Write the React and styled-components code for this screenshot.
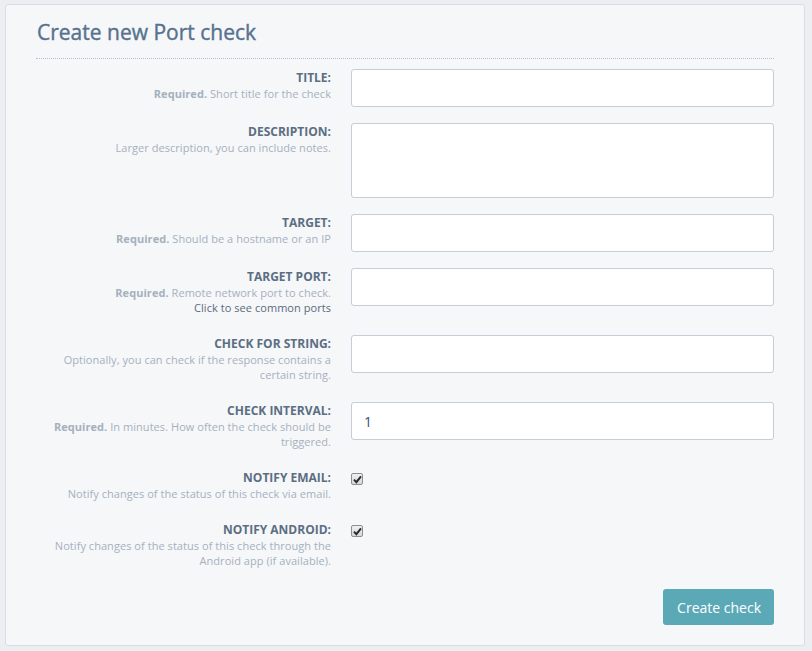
import { createGlobalStyle } from "styled-components";
import styled from "styled-components";

const GlobalStyle = createGlobalStyle`
  html, body {
    margin: 0;
    padding: 0;
    background: #eceef1;
    font-family: "Open Sans", "Liberation Sans", sans-serif;
  }
  * { box-sizing: border-box; }
`;

const fields = [
  { label: "Title:", required: true, help: "Short title for the check", type: "input" },
  { label: "Description:", help: "Larger description, you can include notes.", type: "textarea" },
  { label: "Target:", required: true, help: "Should be a hostname or an IP", type: "input" },
  {
    label: "Target port:",
    required: true,
    help: "Remote network port to check.",
    link: "Click to see common ports",
    type: "input",
  },
  {
    label: "Check for string:",
    help: "Optionally, you can check if the response contains a certain string.",
    type: "input",
  },
  {
    label: "Check interval:",
    required: true,
    help: "In minutes. How often the check should be triggered.",
    type: "input",
    value: "1",
  },
  { label: "Notify email:", help: "Notify changes of the status of this check via email.", type: "checkbox" },
  {
    label: "Notify Android:",
    help: "Notify changes of the status of this check through the Android app (if available).",
    type: "checkbox",
  },
];

function CheckMark() {
  return (
    <CheckBox>
      <svg width="9" height="9" viewBox="0 0 9 9">
        <path d="M1 4.6 L3.4 7.2 L8 1.4" fill="none" stroke="#2b2b2b" strokeWidth="2" />
      </svg>
    </CheckBox>
  );
}

export default function App() {
  return (
    <>
      <GlobalStyle />
      <Page>
        <Card>
          <Heading>Create new Port check</Heading>
          <Form>
            {fields.map((f) => (
              <FormRow key={f.label}>
                <LabelCol>
                  <Label>{f.label}</Label>
                  <Help>
                    {f.required && <strong>Required. </strong>}
                    {f.help}
                    {f.link && <HelpLink>{f.link}</HelpLink>}
                  </Help>
                </LabelCol>
                <FieldCol>
                  {f.type === "input" && <Input defaultValue={f.value || ""} />}
                  {f.type === "textarea" && <TextArea />}
                  {f.type === "checkbox" && <CheckMark />}
                </FieldCol>
              </FormRow>
            ))}
            <Actions>
              <SubmitButton type="button">Create check</SubmitButton>
            </Actions>
          </Form>
        </Card>
      </Page>
    </>
  );
}

const Page = styled.div`
  padding: 4px 7px 6px 5px;
`;

const Card = styled.div`
  background: #f6f7f9;
  border: 1px solid #d9dee4;
  border-radius: 3px;
  padding: 14px 30px 20px 30px;
`;

const Heading = styled.h1`
  margin: 0;
  font-size: 21px;
  line-height: 24px;
  font-weight: 400;
  color: #56728f;
  padding: 1px 0 14px 1px;
  border-bottom: 1px dotted #b4bfcb;
  -webkit-text-stroke: 0.4px #56728f;
`;

const Form = styled.form`
  padding-top: 10px;
`;

const FormRow = styled.div`
  display: grid;
  grid-template-columns: 295px 1fr;
  column-gap: 20px;
  margin-bottom: 16px;
`;

const LabelCol = styled.div`
  text-align: right;
  padding-bottom: 4px;
`;

const Label = styled.div`
  font-size: 12px;
  line-height: 17px;
  font-weight: 700;
  text-transform: uppercase;
  color: #5b6e82;
`;

const Help = styled.div`
  font-size: 11px;
  line-height: 15px;
  color: #a5b1be;
  letter-spacing: 0.05px;

  strong {
    font-weight: 700;
  }
`;

const HelpLink = styled.a`
  display: block;
  color: #5a6b7c;
  cursor: pointer;
`;

const FieldCol = styled.div`
  display: flex;
  align-items: flex-start;
`;

const Input = styled.input`
  width: 100%;
  height: 38px;
  border: 1px solid #c5cdd6;
  border-radius: 3px;
  background: #fff;
  padding: 0 12px;
  font-family: inherit;
  font-size: 14px;
  color: #3d5068;
  outline: none;
`;

const TextArea = styled.textarea`
  width: 100%;
  height: 75px;
  border: 1px solid #c5cdd6;
  border-radius: 3px;
  background: #fff;
  resize: none;
  outline: none;
`;

const CheckBox = styled.span`
  display: flex;
  align-items: center;
  justify-content: center;
  width: 12px;
  height: 12px;
  margin: 4px 0 0 0;
  border: 1px solid #8e8e8e;
  border-radius: 2px;
  background: linear-gradient(#f0f0f0, #d8d8d8);
`;

const Actions = styled.div`
  display: flex;
  justify-content: flex-end;
  padding-top: 1px;
`;

const SubmitButton = styled.button`
  height: 36px;
  padding: 0 13px 0 14px;
  background: #5ba9b7;
  border: none;
  border-radius: 3px;
  color: #fff;
  font-family: inherit;
  font-size: 14px;
  cursor: pointer;
`;
